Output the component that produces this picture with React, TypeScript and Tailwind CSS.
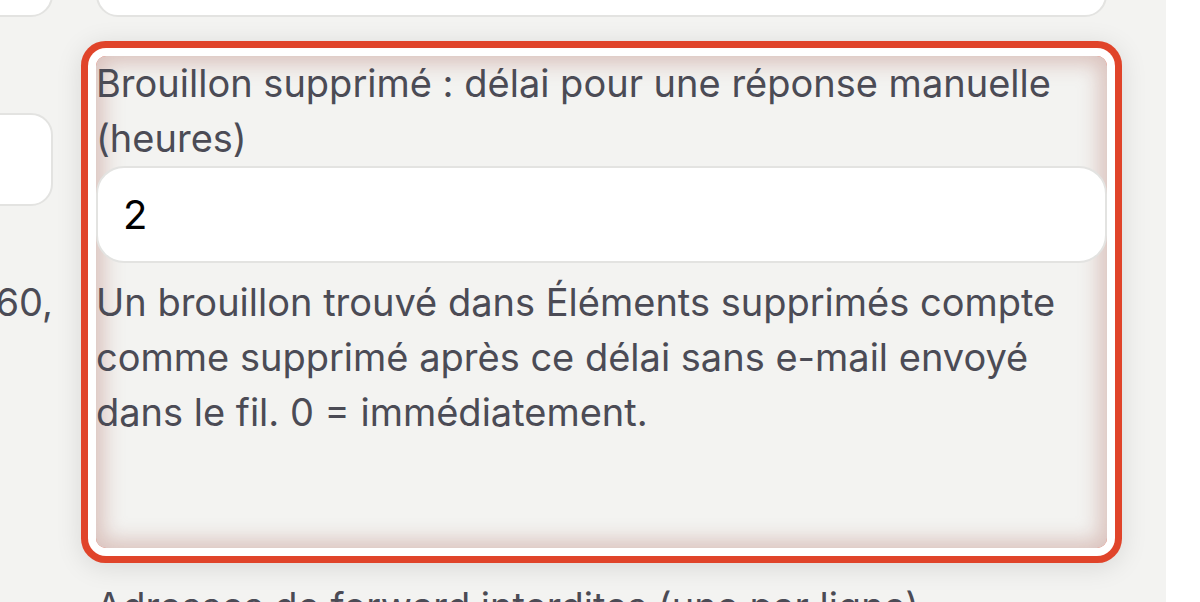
const font = { fontFamily: "Inter, 'Noto Sans', sans-serif" };

const App = () => {
  return (
    <div className="flex h-[602px] overflow-hidden bg-white" style={font}>
      <div className="flex w-[1166px] shrink-0 gap-[43px] overflow-hidden bg-[#f3f3f1]">
        {/* left column, mostly off screen */}
        <div className="-ml-[300px] flex w-[353px] shrink-0 flex-col">
          <div className="-mt-[80px] h-[97px] shrink-0 rounded-[22px] border-2 border-[#e3e3e1] bg-white" />
          <div className="mt-[96px] h-[93px] shrink-0 rounded-[22px] border-2 border-[#e3e3e1] bg-white" />
          <p className="mt-[69px] text-right text-[38px] leading-[55px] text-[#4b4b55]">
            60,
          </p>
        </div>

        {/* center column */}
        <div className="flex w-[1011px] shrink-0 flex-col">
          <div className="-mt-[80px] h-[97px] shrink-0 rounded-[22px] border-2 border-[#e3e3e1] bg-white" />

          <div className="relative mt-[39px] h-[492px] shrink-0 rounded-[10px] shadow-[inset_0_0_20px_8px_rgba(175,105,95,0.35),0_0_0_8px_#ffffff,0_0_0_15px_#e0442a,0_4px_26px_16px_rgba(0,0,0,0.10)]">
            <label className="block text-[38px] leading-[55px] text-[#4b4b55]">
              Brouillon supprimé : délai pour une réponse manuelle (heures)
            </label>
            <div className="flex h-[97px] items-center rounded-[28px] border-2 border-[#e3e3e1] bg-white pl-[25px] text-[40px] text-black">
              2
            </div>
            <p className="mt-[12px] text-[38px] leading-[55px] text-[#4b4b55]">
              Un brouillon trouvé dans Éléments supprimés compte comme supprimé
              après ce délai sans e-mail envoyé dans le fil. 0 = immédiatement.
            </p>
          </div>

          <p className="mt-[31px] shrink-0 text-[38px] leading-[55px] text-[#4b4b55]">
            Adresses de forward interdites (une par ligne)
          </p>
        </div>
      </div>
    </div>
  );
};

export default App;
